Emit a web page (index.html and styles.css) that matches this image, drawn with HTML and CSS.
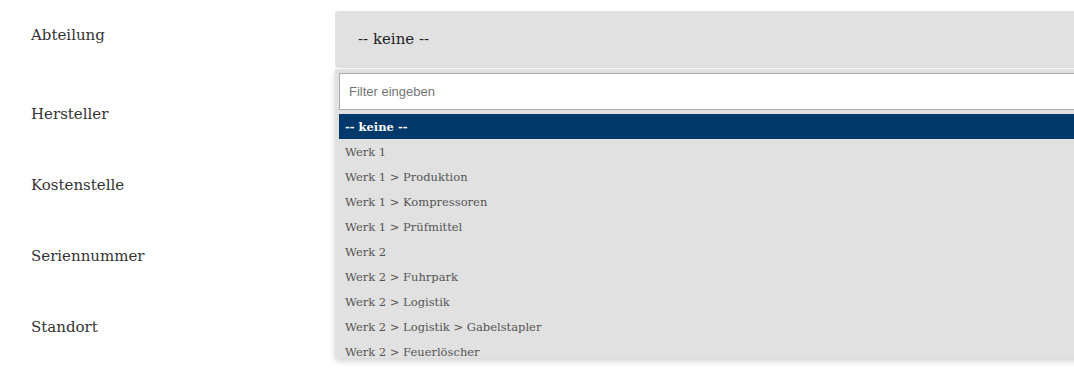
FILE: index.html
```html
<!DOCTYPE html>
<html lang="de">
<head>
    <meta charset="UTF-8">
    <title>Anlage bearbeiten</title>
    <link rel="stylesheet" href="styles.css">
</head>
<body>

<div class="form">
    <div class="form-row first">
        <label class="form-label">Abteilung</label>
        <div class="field">
            <div class="select-box">-- keine --</div>
            <div class="dropdown">
                <input class="filter" type="text" placeholder="Filter eingeben">
                <ul class="options">
                    <li class="selected">-- keine --</li>
                    <li>Werk 1</li>
                    <li>Werk 1 &gt; Produktion</li>
                    <li>Werk 1 &gt; Kompressoren</li>
                    <li>Werk 1 &gt; Prüfmittel</li>
                    <li>Werk 2</li>
                    <li>Werk 2 &gt; Fuhrpark</li>
                    <li>Werk 2 &gt; Logistik</li>
                    <li>Werk 2 &gt; Logistik &gt; Gabelstapler</li>
                    <li>Werk 2 &gt; Feuerlöscher</li>
                </ul>
            </div>
        </div>
    </div>
    <div class="form-row">
        <label class="form-label">Hersteller</label>
        <div class="field"><div class="input-box"></div></div>
    </div>
    <div class="form-row">
        <label class="form-label">Kostenstelle</label>
        <div class="field"><div class="input-box"></div></div>
    </div>
    <div class="form-row">
        <label class="form-label">Seriennummer</label>
        <div class="field"><div class="input-box"></div></div>
    </div>
    <div class="form-row">
        <label class="form-label">Standort</label>
        <div class="field"><div class="input-box"></div></div>
    </div>
</div>

</body>
</html>
```

FILE: styles.css
```css
body {
    font-family: 'DejaVu Serif', serif;
    margin: 0;
    padding: 0;
    background-color: #fff;
    overflow: hidden;
}

.form {
    padding-top: 11px;
    width: 1200px;
}

.form-row {
    display: grid;
    grid-template-columns: 335px 1fr;
    margin-bottom: 22px;
}

.form-label {
    padding: 12px 0 0 31px;
    font-size: 15px;
    line-height: 24px;
    color: #333;
}

.field {
    position: relative;
}

.select-box {
    height: 57px;
    box-sizing: border-box;
    background-color: #e1e1e1;
    border-radius: 4px;
    padding: 16px 0 0 23px;
    font-size: 15px;
    line-height: 24px;
    color: #222;
}

.input-box {
    height: 49px;
    background-color: #e1e1e1;
    border-radius: 4px;
}

.dropdown {
    position: absolute;
    top: 58px;
    left: 0;
    right: 0;
    padding: 4px 4px 0 4px;
    background-color: #e1e1e1;
    box-shadow: 0 3px 6px rgba(0,0,0,0.18);
    z-index: 10;
}

.filter {
    display: block;
    width: 100%;
    height: 37px;
    box-sizing: border-box;
    border: 1px solid #aaa;
    padding: 0 9px;
    font-family: 'Liberation Sans', Arial, sans-serif;
    font-size: 13px;
    color: #333;
    background: #fff;
    outline: none;
}

.filter::placeholder {
    color: #757575;
}

.options {
    list-style: none;
    margin: 4px 0 0 0;
    padding: 0;
    height: 244px;
    overflow: hidden;
}

.options li {
    height: 25px;
    box-sizing: border-box;
    padding: 1px 0 0 6px;
    line-height: 24px;
    font-size: 11.5px;
    color: #555;
    white-space: nowrap;
}

.options li.selected {
    background-color: #02386a;
    color: #fff;
    font-weight: bold;
}
```
